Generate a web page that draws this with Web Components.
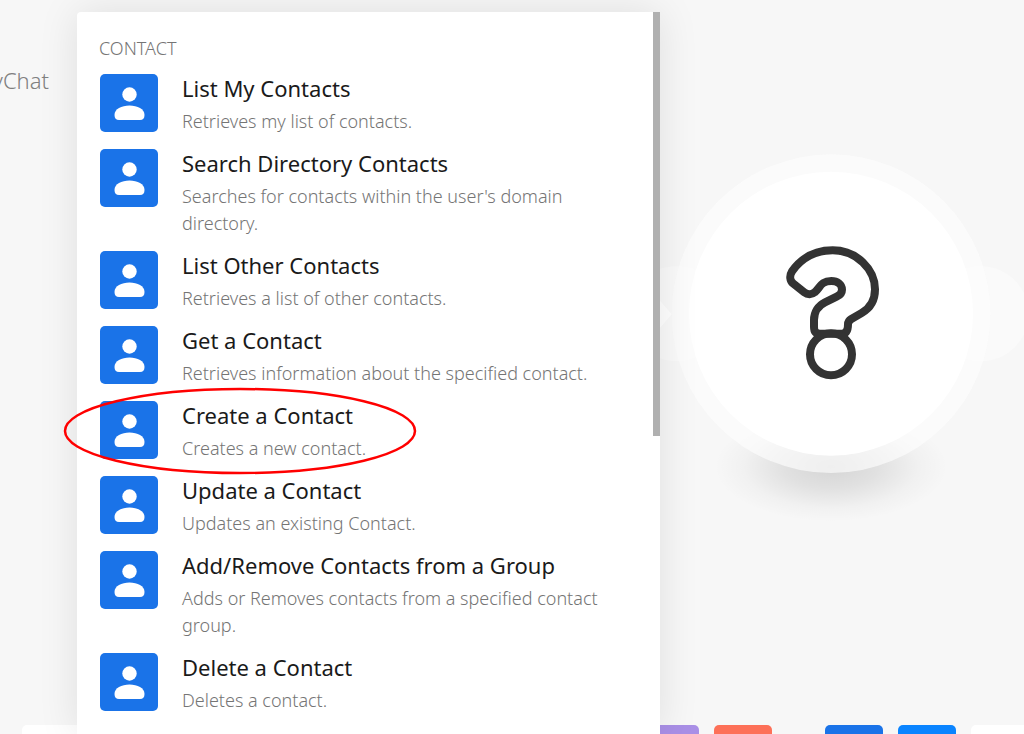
<!DOCTYPE html>
<html lang="en">
<head>
<meta charset="utf-8">
<meta name="viewport" content="width=device-width, initial-scale=1">
<title>Scenario editor</title>
<style>
  body { margin: 0; background: #f7f7f7; font-family: "Noto Sans", "Open Sans", sans-serif; }
</style>
</head>
<body>
<scenario-editor>
  <span slot="label">yChat</span>
  <module-menu slot="menu" heading="CONTACT">
    <module-action name="List My Contacts">Retrieves my list of contacts.</module-action>
    <module-action name="Search Directory Contacts">Searches for contacts within the user's domain directory.</module-action>
    <module-action name="List Other Contacts">Retrieves a list of other contacts.</module-action>
    <module-action name="Get a Contact">Retrieves information about the specified contact.</module-action>
    <module-action name="Create a Contact" marked>Creates a new contact.</module-action>
    <module-action name="Update a Contact">Updates an existing Contact.</module-action>
    <module-action name="Add/Remove Contacts from a Group">Adds or Removes contacts from a specified contact group.</module-action>
    <module-action name="Delete a Contact">Deletes a contact.</module-action>
  </module-menu>
  <empty-module slot="module"></empty-module>
  <app-dock slot="dock"></app-dock>
</scenario-editor>

<script>
function define(name, html, setup) {
  const template = document.createElement("template");
  template.innerHTML = html;
  customElements.define(name, class extends HTMLElement {
    constructor() {
      super();
      this.attachShadow({ mode: "open" }).append(template.content.cloneNode(true));
    }
    connectedCallback() { if (setup) setup(this, this.shadowRoot); }
  });
}

define("module-action", `
  <style>
    :host { display: block; position: relative; }
    button {
      display: grid; grid-template-columns: 58px 1fr; column-gap: 24px; align-items: start;
      width: 100%; margin: 0; padding: 0; border: 0; background: none;
      font: inherit; text-align: left; cursor: pointer;
    }
    .tile { display: block; width: 58px; height: 58px; }
    .text { display: flex; flex-direction: column; gap: 6px; }
    .name { font-size: 22px; line-height: 28px; color: #1a1a1a; }
    .about { font-weight: 300; font-size: 18px; line-height: 27px; color: #757575; }
    .ring { display: none; position: absolute; left: -37px; top: -15px; width: 354px; height: 90px; pointer-events: none; }
    :host([marked]) { z-index: 1; }
    :host([marked]) .ring { display: block; }
  </style>
  <button type="button">
    <svg class="tile" viewBox="0 0 58 58" aria-hidden="true">
      <rect width="58" height="58" rx="5" fill="#1a73e8"/>
      <circle cx="29.500" cy="20.500" r="7.200" fill="#fff"/>
      <path d="M14.500 41c0-6 7-9.500 15-9.500s15 3.500 15 9.500c0 3.500-1.500 5-4.500 5h-21c-3 0-4.500-1.500-4.500-5z" fill="#fff"/>
    </svg>
    <span class="text"><span class="name"></span><span class="about"><slot></slot></span></span>
  </button>
  <svg class="ring" viewBox="0 0 354 90" aria-hidden="true">
    <ellipse cx="177" cy="45" rx="175" ry="42" fill="none" stroke="#f00" stroke-width="2.500"/>
  </svg>`,
  (host, root) => { root.querySelector(".name").textContent = host.getAttribute("name"); });

define("module-menu", `
  <style>
    :host {
      display: grid; grid-template-columns: 1fr 7px; background: #fff;
      border-radius: 4px 0 0 0; box-shadow: 0 0 40px rgba(0, 0, 0, .1);
    }
    section { padding: 23px 40px 0 22px; }
    h2 { margin: 0 0 12px; font-size: 18px; line-height: 27px; font-weight: 300; color: #757575; }
    .list { display: flex; flex-direction: column; gap: 14px; padding-left: 1px; }
    .track { display: grid; grid-template-rows: 424fr 298fr; }
    .thumb { background: #b0b0b0; }
  </style>
  <section><h2></h2><div class="list"><slot></slot></div></section>
  <div class="track"><div class="thumb"></div></div>`,
  (host, root) => { root.querySelector("h2").textContent = host.getAttribute("heading"); });

define("empty-module", `
  <style>
    :host { display: block; }
    svg { display: block; width: 384px; height: 380px; overflow: visible; }
  </style>
  <svg viewBox="0 0 1152 1140" role="img" aria-label="Empty module">
    <defs>
      <radialGradient id="shade">
        <stop offset="0" stop-color="#000" stop-opacity=".14"/>
        <stop offset=".4" stop-color="#000" stop-opacity=".09"/>
        <stop offset=".75" stop-color="#000" stop-opacity=".025"/>
        <stop offset="1" stop-color="#000" stop-opacity="0"/>
      </radialGradient>
    </defs>
    <ellipse cx="573" cy="980" rx="350" ry="165" fill="url(#shade)"/>
    <circle cx="1024" cy="521" r="142" fill="#fafafa"/>
    <circle cx="108" cy="521" r="142" fill="#fafafa"/>
    <circle cx="573" cy="521" r="478" fill="#fdfdfd" opacity=".65"/>
    <path d="M45 465l50 58-50 58z" fill="#fff"/>
    <circle cx="573" cy="521" r="426" fill="#fff"/>
    <g fill="none" stroke="#333" stroke-width="24" stroke-linejoin="round">
      <path d="M456 394C486 352 524 331 578 331C650 331 705 388 705 448C705 480 690 505 665 519L634 537C626 542 624 546 624 553C624 569 620 581 606 581H540C526 581 522 573 522 560V540C522 518 534 497 555 487L590 470C601 465 606 458 606 449C606 433 592 423 574 423C542 423 541 443 524 457C515 465 502 464 493 457L460 431C449 422 448 407 456 394Z"/>
      <circle cx="573" cy="643" r="63"/>
    </g>
  </svg>`);

define("app-dock", `
  <style>
    :host { display: flex; gap: 15px; height: 9px; overflow: hidden; }
    i { display: block; flex: none; width: 58px; height: 58px; border-radius: 5px; background: var(--tile); }
    .wide { flex: 1; }
    .apart { margin-left: 38px; }
  </style>
  <i class="wide" style="--tile:#fff"></i>
  <i style="--tile:#a98fe6"></i>
  <i style="--tile:#fd7058"></i>
  <i class="apart" style="--tile:#1a73e8"></i>
  <i style="--tile:#0a84ff"></i>
  <i style="--tile:#fff"></i>`);

define("scenario-editor", `
  <style>
    :host {
      display: grid; height: 100vh; overflow: hidden; position: relative;
      grid-template-columns: 77px 583px 1fr; grid-template-rows: 1fr 9px;
    }
    .label {
      grid-area: 1 / 1; display: flex; justify-content: flex-end; padding: 65px 28px 0 0;
      font-size: 22px; line-height: 30px; font-weight: 300; color: #808080;
    }
    .menu { grid-area: 1 / 2 / 3 / 3; display: grid; margin-top: 12px; z-index: 2; min-height: 0; }
    .module { grid-area: 1 / 3; margin: 140px 0 0 -20px; min-width: 0; }
    .dock { grid-area: 2 / 1 / 3 / 4; padding-left: 22px; margin-right: -5px; }
  </style>
  <div class="label"><slot name="label"></slot></div>
  <div class="menu"><slot name="menu"></slot></div>
  <div class="module"><slot name="module"></slot></div>
  <div class="dock"><slot name="dock"></slot></div>`);
</script>
</body>
</html>
